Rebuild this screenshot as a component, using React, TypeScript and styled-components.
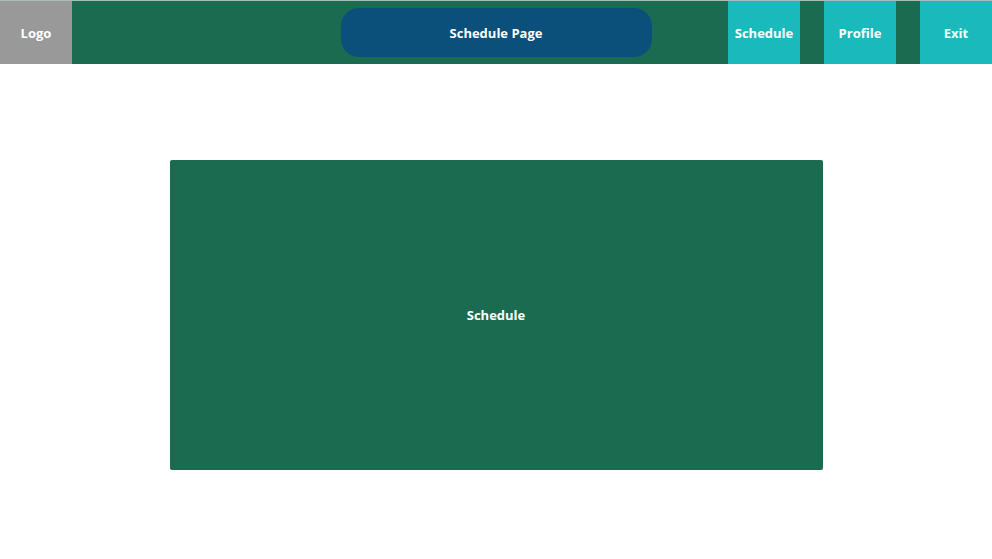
import React from "react";
import styled, { createGlobalStyle } from "styled-components";

const GlobalStyle = createGlobalStyle`
  html, body {
    margin: 0;
    padding: 0;
    background: #ffffff;
    font-family: "Open Sans", "Noto Sans", sans-serif;
  }
  * {
    box-sizing: border-box;
  }
`;

const Wrapper = styled.div`
  width: 100%;
  min-height: 100vh;
  display: flex;
  flex-direction: column;
`;

const Header = styled.header`
  display: grid;
  grid-template-columns: 1fr 311px 1fr;
  align-items: center;
  height: 64px;
  background: #1b6b50;
  border-top: 1px solid #a9bdb6;
`;

const Logo = styled.div`
  width: 72px;
  height: 100%;
  display: flex;
  align-items: center;
  justify-content: center;
  background: #999999;
  color: #ffffff;
  font-size: 13px;
  font-weight: 700;
`;

const Title = styled.div`
  height: 49px;
  display: flex;
  align-items: center;
  justify-content: center;
  background: #0b4f7b;
  border-radius: 18px;
  color: #ffffff;
  font-size: 13px;
  font-weight: 700;
`;

const Nav = styled.nav`
  height: 100%;
  display: flex;
  justify-content: flex-end;
  gap: 24px;
`;

const NavButton = styled.button`
  width: 72px;
  height: 100%;
  border: none;
  padding: 0;
  background: #19b9bc;
  color: #ffffff;
  font-family: "Open Sans", "Noto Sans", sans-serif;
  font-size: 13px;
  font-weight: 700;
  cursor: pointer;
`;

const Main = styled.main`
  display: flex;
  justify-content: center;
  padding-top: 96px;
`;

const ScheduleBox = styled.section`
  width: 653px;
  height: 310px;
  display: flex;
  align-items: center;
  justify-content: center;
  background: #1b6b50;
  border-radius: 2px;
  color: #ffffff;
  font-size: 13px;
  font-weight: 700;
`;

const App: React.FC = () => {
  return (
    <Wrapper>
      <GlobalStyle />
      <Header>
        <Logo>Logo</Logo>
        <Title>Schedule Page</Title>
        <Nav>
          <NavButton>Schedule</NavButton>
          <NavButton>Profile</NavButton>
          <NavButton>Exit</NavButton>
        </Nav>
      </Header>
      <Main>
        <ScheduleBox>Schedule</ScheduleBox>
      </Main>
    </Wrapper>
  );
};

export default App;
